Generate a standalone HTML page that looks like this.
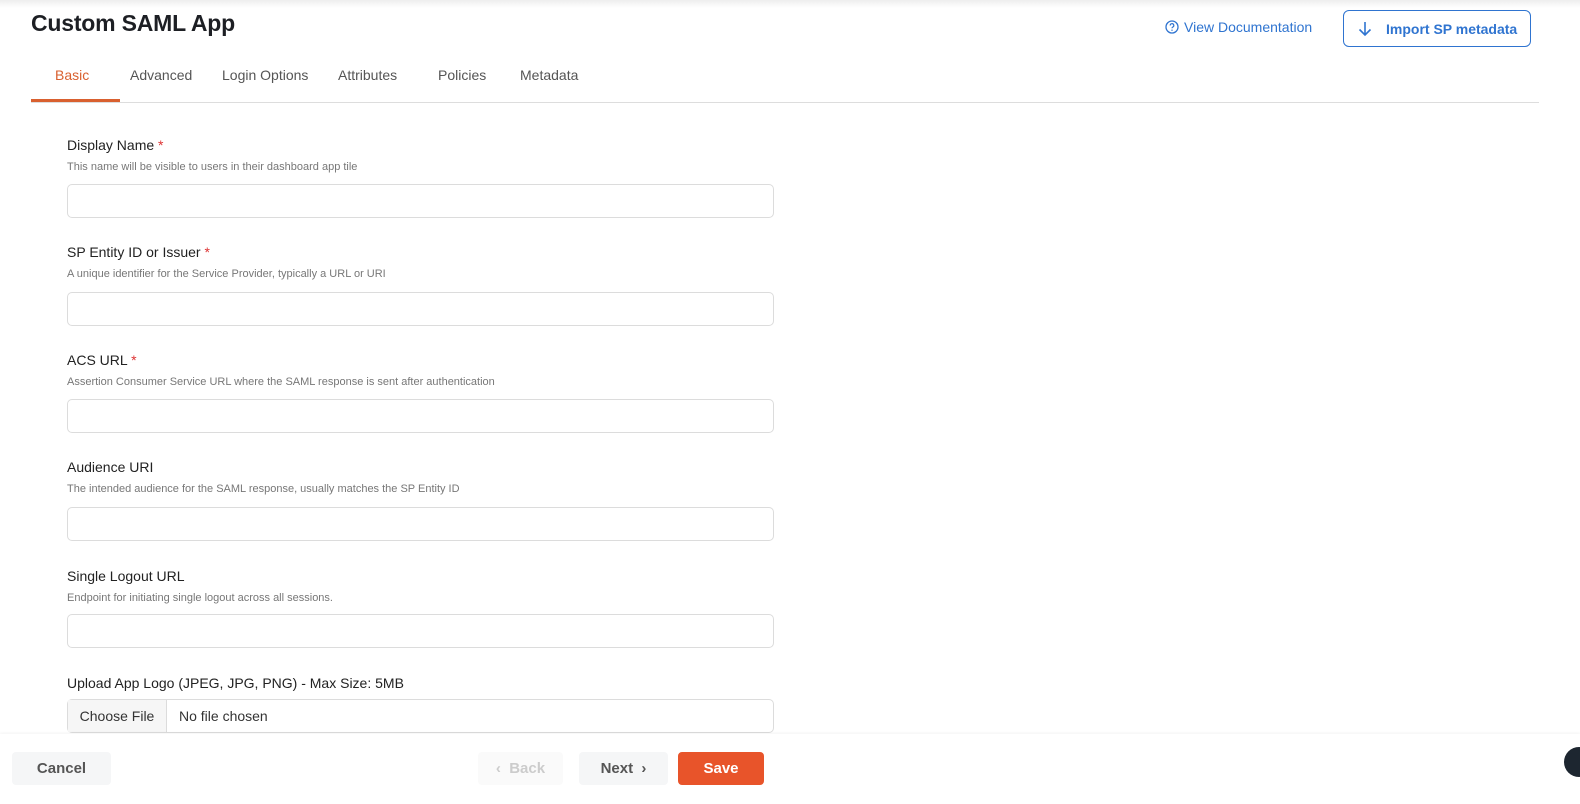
<!DOCTYPE html>
<html><head><meta charset="utf-8"><style>
*{box-sizing:border-box;margin:0;padding:0}
body{width:1580px;height:804px;overflow:hidden;background:#fff;font-family:"Liberation Sans",sans-serif;position:relative;color:#222}
.topshade{position:absolute;left:0;top:0;width:1580px;height:8px;background:linear-gradient(#eee,#fff)}
h1{position:absolute;left:31px;top:10px;font-size:23px;font-weight:bold;color:#1d1f24;letter-spacing:-0.2px}
.doc{position:absolute;left:1165px;top:19px;font-size:14px;color:#2f74d0;display:flex;align-items:center;gap:5px}
.imp{position:absolute;left:1343px;top:10px;width:188px;height:37px;border:1px solid #2f74d0;border-radius:6px;color:#2f74d0;font-weight:bold;font-size:14px;display:flex;align-items:center;padding-left:14px;gap:14px}
.tabs{position:absolute;left:31px;top:66px;width:1508px;height:37px;border-bottom:1px solid #ddd}
.tab{position:absolute;top:1px;font-size:14px;color:#555}
.tab.act{color:#d9602f}
.ul{position:absolute;left:0;top:33px;width:89px;height:3px;background:#d9602f}
.f{position:absolute;left:67px}
.lbl{font-size:14px;color:#222}
.lbl span{color:#d33}
.hint{font-size:11px;color:#777;margin-top:8px}
.inp{position:absolute;left:67px;width:707px;height:34px;border:1px solid #dcdcdc;border-radius:5px}
.file{display:flex;align-items:center;font-size:14px;color:#333}
.file .cf{width:99px;height:100%;background:#f6f6f6;border-right:1px solid #dcdcdc;display:flex;align-items:center;justify-content:center}
.file .nf{padding-left:12px}
.foot{position:absolute;left:0;top:734px;width:1580px;height:70px;background:#fff;box-shadow:0 -1px 3px rgba(0,0,0,0.05)}
.btn{position:absolute;top:752px;height:33px;border-radius:4px;font-size:15px;font-weight:bold;display:flex;align-items:center;justify-content:center}
</style></head><body>
<div class="topshade"></div>
<h1>Custom SAML App</h1>
<div class="doc"><svg width="14" height="14" viewBox="0 0 14 14"><circle cx="7" cy="7" r="6" fill="none" stroke="#2f74d0" stroke-width="1.3"/><path d="M5.2 5.5a1.8 1.8 0 1 1 2.5 1.6c-.5.3-.7.6-.7 1.2" fill="none" stroke="#2f74d0" stroke-width="1.2"/><circle cx="7" cy="10.2" r=".7" fill="#2f74d0"/></svg>View Documentation</div>
<div class="imp"><svg width="14" height="16" viewBox="0 0 14 16"><path d="M7 1v13M1.5 8.5L7 14l5.5-5.5" fill="none" stroke="#2f74d0" stroke-width="1.6"/></svg>Import SP metadata</div>
<div class="tabs">
<div class="tab act" style="left:24px">Basic</div>
<div class="tab" style="left:99px">Advanced</div>
<div class="tab" style="left:191px">Login Options</div>
<div class="tab" style="left:307px">Attributes</div>
<div class="tab" style="left:407px">Policies</div>
<div class="tab" style="left:489px">Metadata</div>
<div class="ul"></div>
</div>
<div class="f" style="top:137px"><div class="lbl">Display Name <span>*</span></div><div class="hint">This name will be visible to users in their dashboard app tile</div></div>
<div class="inp" style="top:184px"></div>
<div class="f" style="top:244px"><div class="lbl">SP Entity ID or Issuer <span>*</span></div><div class="hint">A unique identifier for the Service Provider, typically a URL or URI</div></div>
<div class="inp" style="top:292px"></div>
<div class="f" style="top:352px"><div class="lbl">ACS URL <span>*</span></div><div class="hint">Assertion Consumer Service URL where the SAML response is sent after authentication</div></div>
<div class="inp" style="top:399px"></div>
<div class="f" style="top:459px"><div class="lbl">Audience URI</div><div class="hint">The intended audience for the SAML response, usually matches the SP Entity ID</div></div>
<div class="inp" style="top:507px"></div>
<div class="f" style="top:568px"><div class="lbl">Single Logout URL</div><div class="hint">Endpoint for initiating single logout across all sessions.</div></div>
<div class="inp" style="top:614px"></div>
<div class="f" style="top:675px"><div class="lbl">Upload App Logo (JPEG, JPG, PNG) - Max Size: 5MB</div></div>
<div class="inp file" style="top:699px"><div class="cf">Choose File</div><div class="nf">No file chosen</div></div>
<div class="foot"></div>
<div class="btn" style="left:12px;width:99px;background:#f5f6f7;color:#555">Cancel</div>
<div class="btn" style="left:478px;width:85px;background:#fafafa;color:#ccc">‹&nbsp; Back</div>
<div class="btn" style="left:579px;width:89px;background:#f5f6f7;color:#555">Next&nbsp; ›</div>
<div class="btn" style="left:678px;width:86px;background:#e8542a;color:#fff">Save</div>
<div style="position:absolute;left:1564px;top:747px;width:30px;height:30px;border-radius:50%;background:#1d2630"></div>
</body></html>
